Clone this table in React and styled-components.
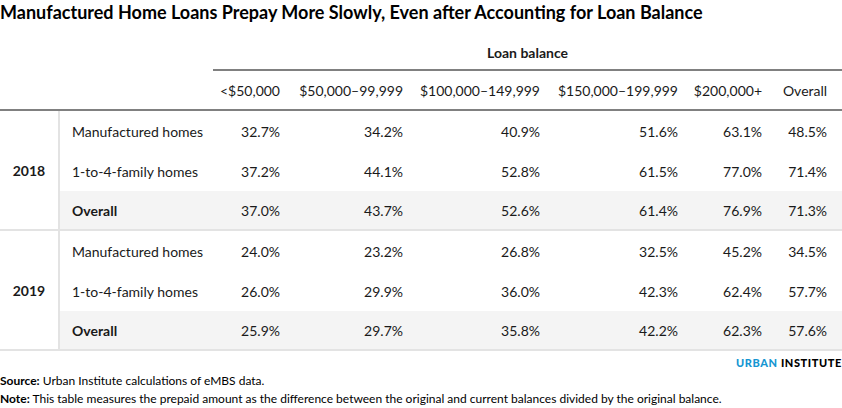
import styled, { createGlobalStyle } from "styled-components";

const GlobalStyle = createGlobalStyle`
  html, body {
    margin: 0;
    padding: 0;
    background: #ffffff;
  }
  body {
    font-family: Lato, "Noto Sans", sans-serif;
    color: #000000;
  }
`;

const Page = styled.div`
  width: 842px;
  height: 408px;
  box-sizing: border-box;
  overflow: hidden;
`;

const Title = styled.h1`
  margin: 0;
  padding-bottom: 3px;
  font-size: 18px;
  font-weight: 700;
  line-height: 24px;
`;

const Table = styled.table`
  width: 842px;
  border-collapse: collapse;
  table-layout: fixed;
  font-size: 14px;
  color: #1a1a1a;
`;

const GroupHead = styled.th`
  height: 34px;
  padding: 0 0 8px;
  vertical-align: bottom;
  font-weight: 700;
  text-align: center;
  border-bottom: ${(p) => (p.$ruled ? "2px solid #808080" : "none")};
`;

const ColHead = styled.th`
  height: 38px;
  padding: 0 ${(p) => (p.$last ? "15px" : "8px")} 0 0;
  font-weight: 400;
  text-align: right;
  white-space: nowrap;
  border-bottom: 2px solid #808080;
`;

const Row = styled.tr`
  background: ${(p) => (p.$total ? "#f4f4f4" : "transparent")};
  border-bottom: ${(p) => (p.$total ? "2px solid #e3e3e3" : "none")};
`;

const Year = styled.td`
  padding: 0;
  text-align: center;
  font-weight: 700;
  background: #ffffff;
  border-right: 2px solid #e3e3e3;
  border-bottom: 2px solid #e3e3e3;
`;

const Label = styled.td`
  height: ${(p) => (p.$total ? "38px" : "40px")};
  padding: 0 0 0 12px;
  font-weight: ${(p) => (p.$total ? 700 : 400)};
  white-space: nowrap;
`;

const Value = styled.td`
  padding: 0 ${(p) => (p.$last ? "15px" : "8px")} 0 0;
  text-align: right;
`;

const Footer = styled.div`
  display: flex;
  flex-direction: column;
  padding-top: 3px;
  font-size: 12px;
  line-height: 18px;
  color: #000000;
`;

const Logo = styled.div`
  align-self: flex-end;
  font-size: 11px;
  font-weight: 900;
  letter-spacing: 0.6px;
  line-height: 18px;
`;

const LogoBlue = styled.span`
  color: #1696d2;
`;

const Caption = styled.div`
  white-space: nowrap;
`;

const widths = [59, 154, 75, 123, 137, 138, 84, 72];
const headers = [
  "<$50,000",
  "$50,000–99,999",
  "$100,000–149,999",
  "$150,000–199,999",
  "$200,000+",
  "Overall",
];

const data = [
  {
    year: "2018",
    rows: [
      ["Manufactured homes", "32.7%", "34.2%", "40.9%", "51.6%", "63.1%", "48.5%"],
      ["1-to-4-family homes", "37.2%", "44.1%", "52.8%", "61.5%", "77.0%", "71.4%"],
      ["Overall", "37.0%", "43.7%", "52.6%", "61.4%", "76.9%", "71.3%"],
    ],
  },
  {
    year: "2019",
    rows: [
      ["Manufactured homes", "24.0%", "23.2%", "26.8%", "32.5%", "45.2%", "34.5%"],
      ["1-to-4-family homes", "26.0%", "29.9%", "36.0%", "42.3%", "62.4%", "57.7%"],
      ["Overall", "25.9%", "29.7%", "35.8%", "42.2%", "62.3%", "57.6%"],
    ],
  },
];

export default function App() {
  return (
    <Page>
      <GlobalStyle />
      <Title>
        Manufactured Home Loans Prepay More Slowly, Even after Accounting for
        Loan Balance
      </Title>
      <Table>
        <colgroup>
          {widths.map((w, i) => (
            <col key={i} style={{ width: w }} />
          ))}
        </colgroup>
        <thead>
          <tr>
            <GroupHead />
            <GroupHead />
            <GroupHead colSpan={6} $ruled>
              Loan balance
            </GroupHead>
          </tr>
          <tr>
            <ColHead />
            <ColHead />
            {headers.map((h, i) => (
              <ColHead key={h} $last={i === headers.length - 1}>
                {h}
              </ColHead>
            ))}
          </tr>
        </thead>
        <tbody>
          {data.map((group) =>
            group.rows.map((row, r) => {
              const total = r === group.rows.length - 1;
              return (
                <Row key={group.year + r} $total={total}>
                  {r === 0 && <Year rowSpan={group.rows.length}>{group.year}</Year>}
                  <Label $total={total}>{row[0]}</Label>
                  {row.slice(1).map((v, i) => (
                    <Value key={i} $last={i === 5}>
                      {v}
                    </Value>
                  ))}
                </Row>
              );
            })
          )}
        </tbody>
      </Table>
      <Footer>
        <Logo>
          <LogoBlue>URBAN</LogoBlue> INSTITUTE
        </Logo>
        <Caption>
          <b>Source:</b> Urban Institute calculations of eMBS data.
        </Caption>
        <Caption>
          <b>Note:</b> This table measures the prepaid amount as the difference
          between the original and current balances divided by the original
          balance.
        </Caption>
      </Footer>
    </Page>
  );
}
